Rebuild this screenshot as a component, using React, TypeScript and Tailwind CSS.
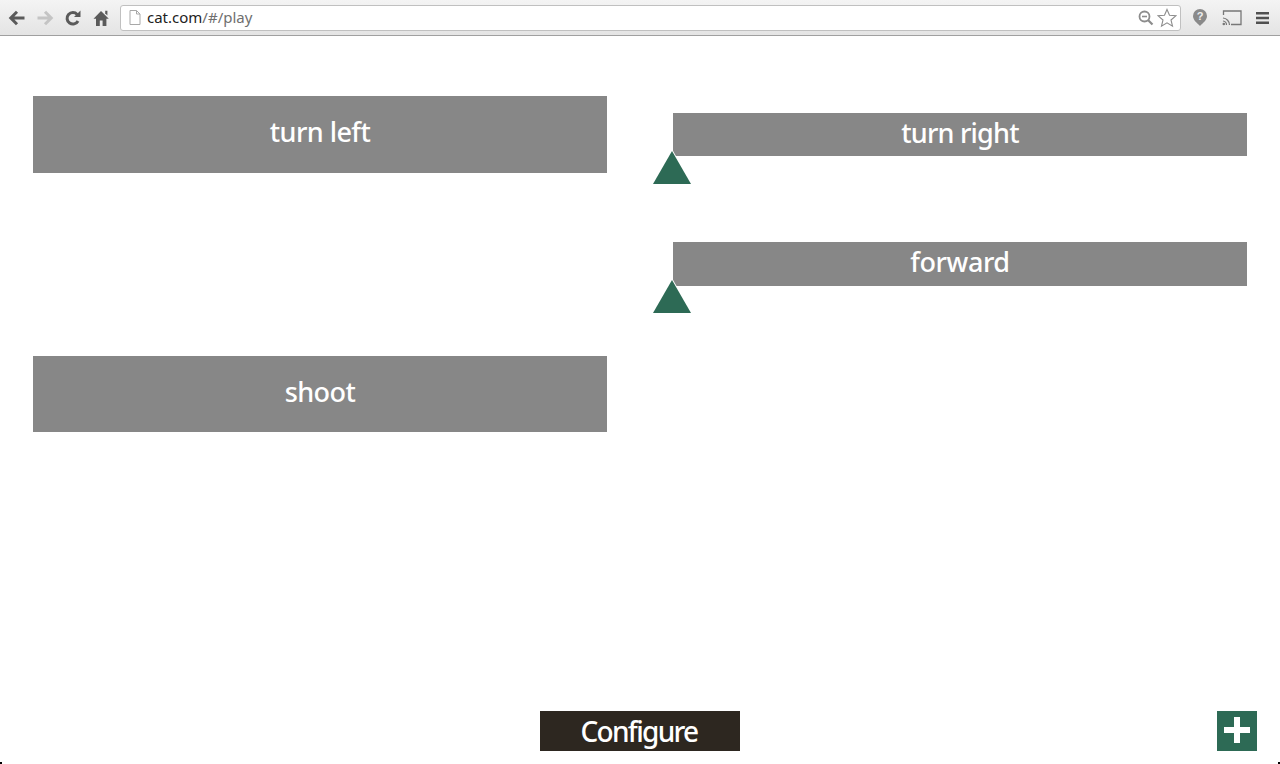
import { ReactNode } from 'react';

const font = "font-['Noto_Sans','Open_Sans',sans-serif]";

function NavIcon({ children, className = '' }: { children: ReactNode; className?: string }) {
  return (
    <svg width="18" height="18" viewBox="0 0 18 18" className={`shrink-0 ${className}`}>
      {children}
    </svg>
  );
}

function Toolbar() {
  return (
    <div className="h-9 shrink-0 flex items-center pl-2 pr-[11px] border-b border-[#a0a0a0] bg-gradient-to-b from-[#f4f4f4] to-[#e4e4e4]">
      {/* back */}
      <NavIcon>
        <path d="M2.5 9 H16.5 M9 2.8 L2.8 9 L9 15.2" fill="none" stroke="#5a5a5a" strokeWidth="3" />
      </NavIcon>
      {/* forward, disabled */}
      <NavIcon className="ml-[10px]">
        <path d="M15.5 9 H1.5 M9 2.8 L15.2 9 L9 15.2" fill="none" stroke="#c4c4c4" strokeWidth="3" />
      </NavIcon>
      {/* reload */}
      <NavIcon className="ml-[10px]">
        <path d="M14 12 A5.8 5.8 0 1 1 13.2 5.4" fill="none" stroke="#5a5a5a" strokeWidth="3" />
        <path d="M10 8 H16.5 V1.5 Z" fill="#5a5a5a" />
      </NavIcon>
      {/* home */}
      <NavIcon className="ml-[11px]">
        <path d="M8 2 L0.5 9.8 H3 V17 H6.8 V11.5 H9.6 V17 H13.4 V9.8 H15.8 Z" fill="#5a5a5a" />
        <path d="M12.2 1.8 H14.4 V6.4 L12.2 4.2 Z" fill="#5a5a5a" />
      </NavIcon>
      {/* address bar */}
      <div className="ml-[9px] h-[26px] flex-1 flex items-center bg-white border border-[#c0c0c0] rounded-[3px] pl-[8px] pr-[3px]">
        <svg width="12" height="15" viewBox="0 0 12 15" className="shrink-0">
          <path d="M1 .5 H7.5 L11 4 V14.5 H1 Z M7.5 .5 V4 H11" fill="#fff" stroke="#a8a8a8" />
        </svg>
        <span className={`ml-[6px] text-[15px] leading-none ${font} text-[#222]`}>
          cat.com<span className="text-[#6f6f6f]">/#/play</span>
        </span>
        <svg width="16" height="16" viewBox="0 0 16 16" className="ml-auto shrink-0">
          <circle cx="6.5" cy="6.5" r="5" fill="none" stroke="#8c8c8c" strokeWidth="1.8" />
          <path d="M4 6.5 H9" stroke="#8c8c8c" strokeWidth="1.6" />
          <path d="M10 10 L14.5 14.5" stroke="#8c8c8c" strokeWidth="2.2" />
        </svg>
        <svg width="20" height="20" viewBox="0 0 20 20" className="ml-[3px] shrink-0">
          <path
            d="M10 1.5 L12.5 7.3 L18.8 7.8 L14 12 L15.5 18.2 L10 14.9 L4.5 18.2 L6 12 L1.2 7.8 L7.5 7.3 Z"
            fill="#fff"
            stroke="#8c8c8c"
            strokeWidth="1.1"
          />
        </svg>
      </div>
      {/* help */}
      <svg width="16" height="19" viewBox="0 0 16 19" className="ml-[11px] shrink-0">
        <path d="M8 1 A7 7 0 0 1 15 8 C15 12 11 15 8 18 C5 15 1 12 1 8 A7 7 0 0 1 8 1 Z" fill="#8a8a8a" />
        <text x="8" y="12" textAnchor="middle" fontSize="11" fontWeight="700" fill="#eee" fontFamily="Liberation Sans, sans-serif">
          ?
        </text>
      </svg>
      {/* cast */}
      <svg width="20" height="16" viewBox="0 0 20 16" className="ml-[14px] shrink-0">
        <path d="M1.5 5 V1 H19 V14.5 H9" fill="none" stroke="#777" strokeWidth="1.3" />
        <path d="M1 8 A7 7 0 0 1 7.5 15 M1 11 A4 4 0 0 1 4.5 15" fill="none" stroke="#777" strokeWidth="1.2" />
        <circle cx="1.8" cy="14" r="1.3" fill="#777" />
      </svg>
      {/* menu */}
      <svg width="13" height="12" viewBox="0 0 13 12" className="ml-[14px] shrink-0">
        <path d="M0 0 H13 V2.5 H0 Z M0 4.7 H13 V7.2 H0 Z M0 9.4 H13 V11.9 H0 Z" fill="#505050" />
      </svg>
    </div>
  );
}

function ActionButton({ label, className }: { label: string; className: string }) {
  return (
    <button className={`w-full flex justify-center bg-[#878787] text-white text-[27px] font-medium ${font} ${className}`}>
      {label}
    </button>
  );
}

// button with the little green marker hanging off its lower left corner
function MarkedButton({ label, className }: { label: string; className: string }) {
  return (
    <div className="relative">
      <ActionButton label={label} className={`items-center leading-none ${className}`} />
      <svg width="42" height="38" viewBox="0 0 42 38" className="absolute left-[-22px] top-[35px]">
        <path d="M21 1 L42 38 H0 Z" fill="#fff" />
        <path d="M21 3 L40 36 H2 Z" fill="#2d6a55" />
      </svg>
    </div>
  );
}

export default function App() {
  return (
    <div className="relative h-[764px] w-[1280px] overflow-hidden flex flex-col bg-white">
      <Toolbar />
      <main className="grid grid-cols-2 gap-x-[66px] px-[33px] pt-[60px]">
        <div className="flex flex-col gap-[183px]">
          <ActionButton label="turn left" className="h-[77px] pt-[22px] leading-none tracking-[-0.55px]" />
          <ActionButton label="shoot" className="h-[76px] pt-[22px] leading-none tracking-[-0.55px]" />
        </div>
        <div className="flex flex-col gap-[86px] pt-[17px]">
          <MarkedButton label="turn right" className="h-[43px] pb-[4px] tracking-[-0.8px]" />
          <MarkedButton label="forward" className="h-[44px] pb-[6px] tracking-[-0.45px]" />
        </div>
      </main>
      <footer className="mt-auto mb-[13px] relative flex justify-center">
        <button className={`w-[200px] h-[40px] pr-[2px] bg-[#2d2720] text-white text-[28px] font-medium leading-none tracking-[-1.7px] ${font}`}>
          Configure
        </button>
        <button className="absolute right-[23px] top-0 w-10 h-10 bg-[#2d6a55] flex items-center justify-center pb-[2px]">
          <svg width="28" height="28" viewBox="0 0 28 28">
            <path d="M11 1 H17 V11 H27 V17 H17 V27 H11 V17 H1 V11 H11 Z" fill="#fff" />
          </svg>
        </button>
      </footer>
      {/* window corners */}
      <span className="absolute left-0 bottom-0 w-[2px] h-[2px] bg-black" />
      <span className="absolute right-0 bottom-0 w-[2px] h-[2px] bg-black" />
    </div>
  );
}
